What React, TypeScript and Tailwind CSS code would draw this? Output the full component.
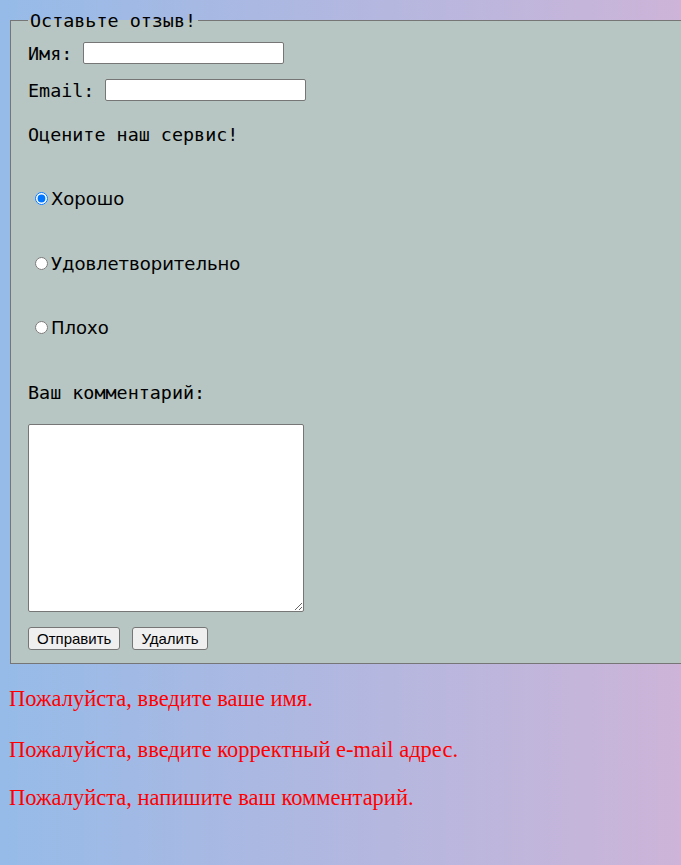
import React from "react";

export default function App() {
  const mono = "font-['DejaVu_Sans_Mono',monospace] text-[18.4px] leading-[21px] text-black";
  const sans = "font-['DejaVu_Sans',sans-serif] text-[18px] leading-[21px] text-black";
  const btn =
    "h-[23px] rounded-[3px] border border-[#767676] bg-[#efefef] px-[8px] font-['Liberation_Sans',Arial,sans-serif] text-[15px] leading-[21px] text-black";
  return (
    <div className="min-h-[865px] w-full overflow-hidden bg-[linear-gradient(to_right,#96bbe8,#cdb4d8)] pt-[10px]">
      <fieldset className="ml-[10px] w-[720px] min-w-0 border border-[#767676] bg-[#b7c6c2] px-[17px] pb-[13px]">
        <legend className={`px-[2px] ${mono}`}>Оставьте отзыв!</legend>
        <div className="flex flex-col items-start">
          <div className="mt-[11px] flex h-[22px] items-center">
            <span className={mono}>Имя:</span>
            <input type="text" className="ml-[11px] h-[22px] w-[201px] rounded-[2px] border border-[#767676] bg-white" />
          </div>
          <div className="mt-[15px] flex h-[22px] items-center">
            <span className={mono}>Email:</span>
            <input type="text" className="ml-[11px] h-[22px] w-[201px] rounded-[2px] border border-[#767676] bg-white" />
          </div>
          <div className={`mt-[23px] ${mono}`}>Оцените наш сервис!</div>

          <label className="mt-[43px] flex h-[21px] items-center">
            <input type="radio" name="rate" defaultChecked className="ml-[7px] mr-[3px] h-[13px] w-[13px]" />
            <span className={sans}>Хорошо</span>
          </label>
          <label className="mt-[44px] flex h-[21px] items-center">
            <input type="radio" name="rate" className="ml-[7px] mr-[3px] h-[13px] w-[13px]" />
            <span className={sans}>Удовлетворительно</span>
          </label>
          <label className="mt-[43px] flex h-[21px] items-center">
            <input type="radio" name="rate" className="ml-[7px] mr-[3px] h-[13px] w-[13px]" />
            <span className={sans}>Плохо</span>
          </label>

          <div className={`mt-[44px] ${mono}`}>Ваш комментарий:</div>
          <textarea className="mt-[21px] h-[188px] w-[276px] resize rounded-[2px] border border-[#767676] bg-white" />
          <div className="mt-[15px] flex gap-[12px]">
            <button className={btn}>Отправить</button>
            <button className={btn}>Удалить</button>
          </div>
        </div>
      </fieldset>
      <div className="pl-[9px] font-['Liberation_Serif','Times_New_Roman',serif] text-[22.5px] leading-[26px] text-[#ff0000]">
        <p className="mt-[22px]">Пожалуйста, введите ваше имя.</p>
        <p className="mt-[25px]">Пожалуйста, введите корректный e-mail адрес.</p>
        <p className="mt-[22px]">Пожалуйста, напишите ваш комментарий.</p>
      </div>
    </div>
  );
}
